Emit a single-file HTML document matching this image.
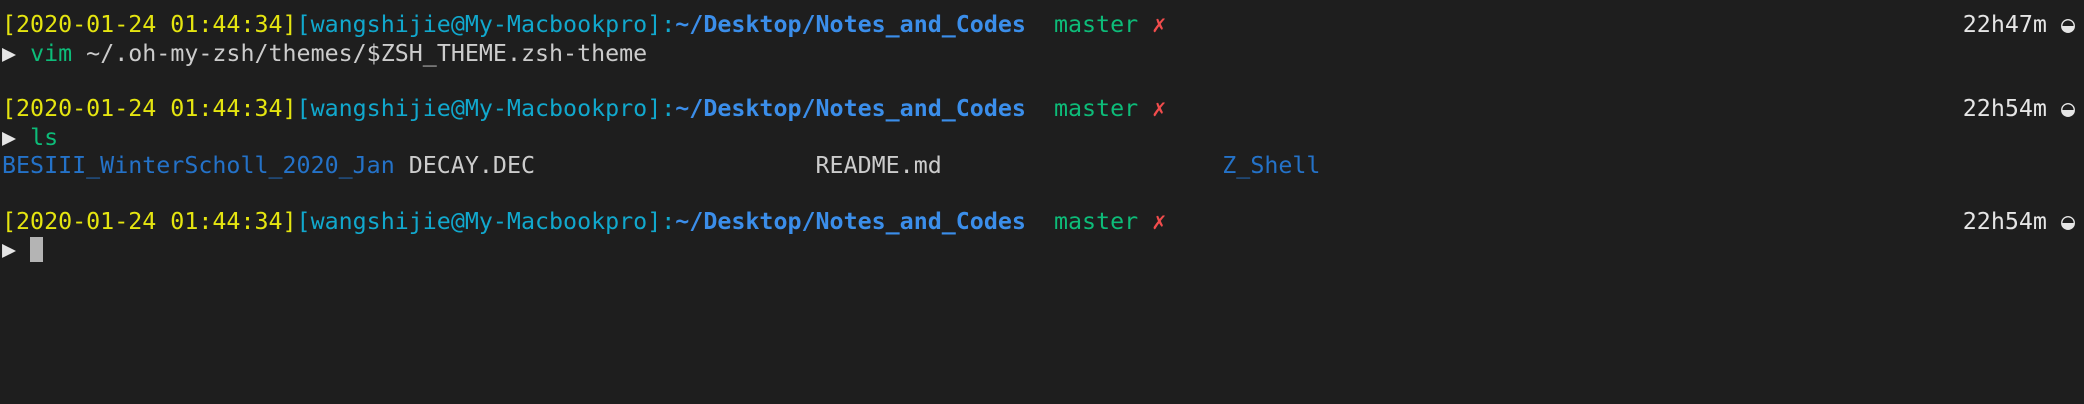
<!DOCTYPE html>
<html><head><meta charset="utf-8"><style>
html,body{margin:0;padding:0;background:#1e1e1e;}
body{width:2084px;height:404px;overflow:hidden;position:relative;}
.l{position:absolute;left:2px;white-space:pre;font-family:"DejaVu Sans Mono","Liberation Mono",monospace;font-size:23.3px;line-height:28px;color:#cccccc;}
.r{position:absolute;right:9px;white-space:pre;font-family:"DejaVu Sans Mono","Liberation Mono",monospace;font-size:23.3px;line-height:28px;color:#e5e5e5;}
.y{color:#e5e510}.c{color:#11a8cd}.b{color:#3b8eea;font-weight:bold}.g{color:#0dbc79}.x{color:#f14c4c}
.lb{color:#2472c8}.w{color:#e5e5e5}
.cur{position:absolute;left:30px;top:237px;width:13px;height:25px;background:#b4b4b4;}
</style></head><body>
<div class="l" style="top:11px"><span class="y">[2020-01-24 01:44:34]</span><span class="c">[wangshijie@My-Macbookpro]</span><span class="c">:</span><span class="b">~/Desktop/Notes_and_Codes</span>  <span class="g">master</span> <span class="x">✗</span></div>
<div class="r" style="top:11px">22h47m ◒</div>
<div class="l" style="top:40px"><span class="w">▶</span> <span class="g">vim</span> ~/.oh-my-zsh/themes/$ZSH_THEME.zsh-theme</div>
<div class="l" style="top:95px"><span class="y">[2020-01-24 01:44:34]</span><span class="c">[wangshijie@My-Macbookpro]</span><span class="c">:</span><span class="b">~/Desktop/Notes_and_Codes</span>  <span class="g">master</span> <span class="x">✗</span></div>
<div class="r" style="top:95px">22h54m ◒</div>
<div class="l" style="top:124px"><span class="w">▶</span> <span class="g">ls</span></div>
<div class="l" style="top:152px"><span class="lb">BESIII_WinterScholl_2020_Jan</span> DECAY.DEC                    README.md                    <span class="lb">Z_Shell</span></div>
<div class="l" style="top:208px"><span class="y">[2020-01-24 01:44:34]</span><span class="c">[wangshijie@My-Macbookpro]</span><span class="c">:</span><span class="b">~/Desktop/Notes_and_Codes</span>  <span class="g">master</span> <span class="x">✗</span></div>
<div class="r" style="top:208px">22h54m ◒</div>
<div class="l" style="top:236px"><span class="w">▶</span></div>
<div class="cur"></div>
</body></html>
